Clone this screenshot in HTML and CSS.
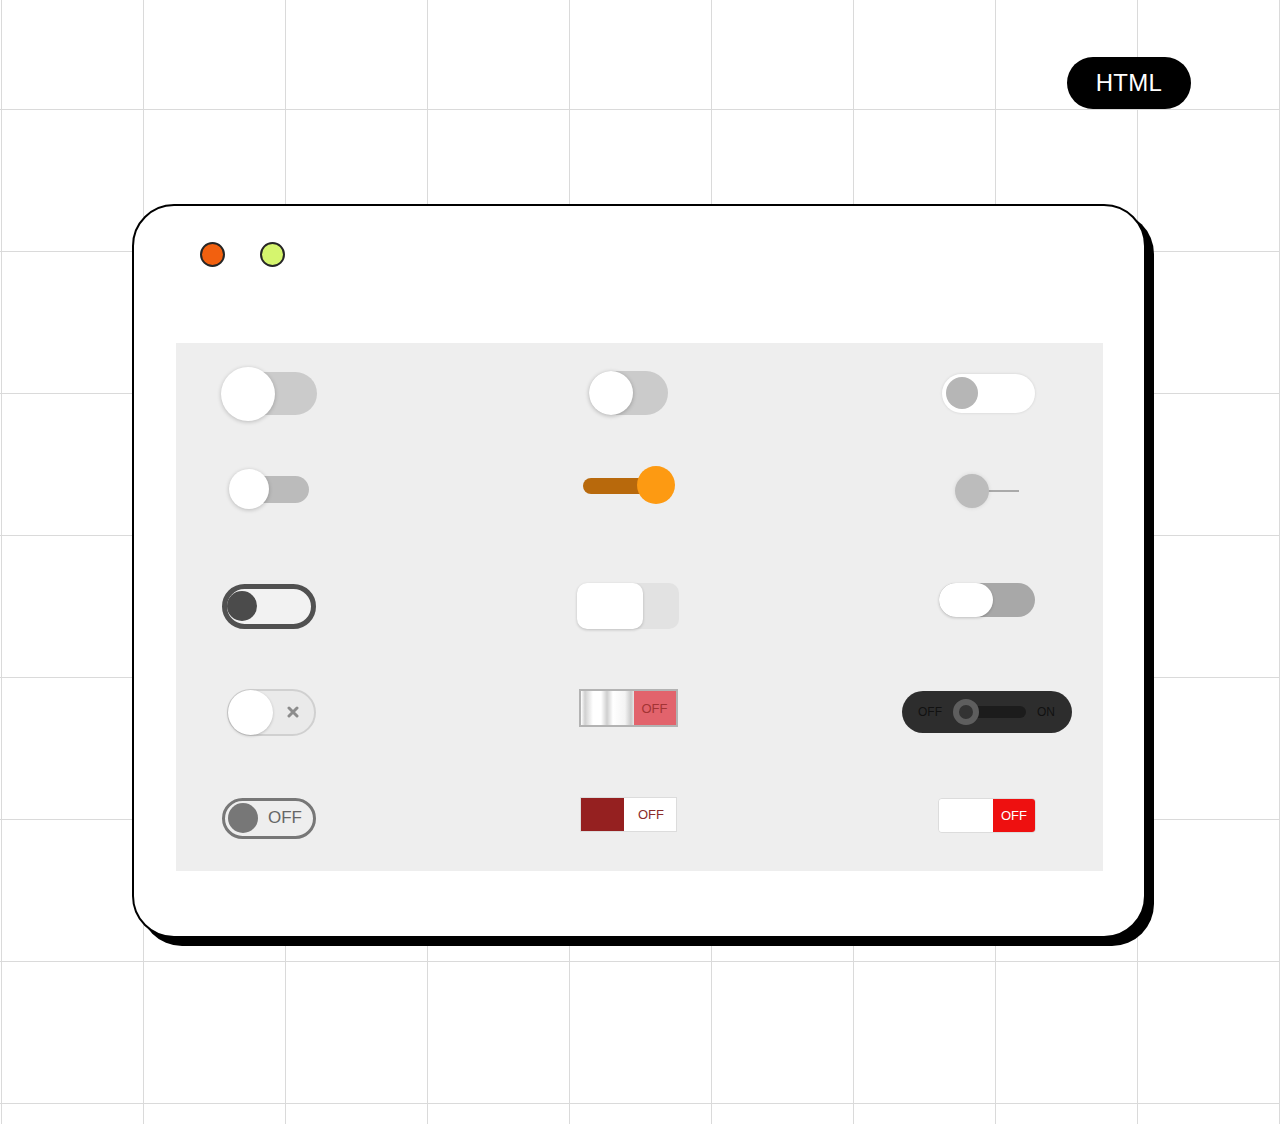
FILE: index.html
```html
<!DOCTYPE html>
<html lang="en">
<head>
<meta charset="utf-8">
<title>Toggle Switches</title>
<link rel="stylesheet" href="styles.css">
</head>
<body>
<div class="page">
  <header class="topbar"><span class="badge">HTML</span></header>
  <main class="window">
    <div class="dots"><span class="dot dot-orange"></span><span class="dot dot-green"></span></div>
    <section class="panel">
      <!-- row 1 -->
      <div class="cell"><div class="sw sw-ios-lg"><span class="knob"></span></div></div>
      <div class="cell"><div class="sw sw-ios"><span class="knob"></span></div></div>
      <div class="cell"><div class="sw sw-white"><span class="knob"></span></div></div>
      <!-- row 2 -->
      <div class="cell"><div class="sw sw-thin"><span class="knob"></span></div></div>
      <div class="cell"><div class="sw sw-orange"><span class="knob"></span></div></div>
      <div class="cell"><div class="sw sw-line"><span class="line"></span><span class="knob"></span></div></div>
      <!-- row 3 -->
      <div class="cell"><div class="sw sw-outline"><span class="knob"></span></div></div>
      <div class="cell"><div class="sw sw-square"><span class="knob"></span></div></div>
      <div class="cell"><div class="sw sw-pill"><span class="knob"></span></div></div>
      <!-- row 4 -->
      <div class="cell"><div class="sw sw-x"><span class="knob"></span>
        <svg class="x-mark" width="12" height="12" viewBox="0 0 12 12"><path d="M2 2L10 10M10 2L2 10" stroke="#8c8c8c" stroke-width="3" stroke-linecap="round"/></svg></div></div>
      <div class="cell"><div class="sw sw-metal"><span class="metal-knob"></span><span class="metal-label">OFF</span></div></div>
      <div class="cell"><div class="sw sw-dark"><span class="dark-label">OFF</span><span class="dark-track"><span class="dark-knob"></span></span><span class="dark-label">ON</span></div></div>
      <!-- row 5 -->
      <div class="cell"><div class="sw sw-off"><span class="off-knob"></span><span class="off-label">OFF</span></div></div>
      <div class="cell"><div class="sw sw-maroon"><span class="maroon-block"></span><span class="maroon-label">OFF</span></div></div>
      <div class="cell"><div class="sw sw-red"><span class="red-blank"></span><span class="red-label">OFF</span></div></div>
    </section>
  </main>
</div>
</body>
</html>
```
FILE: styles.css
```css
* { box-sizing: border-box; }
html, body { margin: 0; padding: 0; }
body {
  width: 1280px;
  height: 1124px;
  overflow: hidden;
  font-family: "Liberation Sans", Arial, sans-serif;
  background-color: #ffffff;
  background-image:
    linear-gradient(to right, #dadada 1px, transparent 1px),
    linear-gradient(to bottom, #dadada 1px, transparent 1px);
  background-size: 142px 142px;
  background-position: 143px 109px;
}
.page { padding: 57px 0 0 0; }
.topbar { display: flex; justify-content: flex-end; padding-right: 89px; }
.badge {
  width: 124px; height: 52px; border-radius: 26px;
  background: #000; color: #fff;
  display: flex; align-items: center; justify-content: center;
  font-size: 24px; letter-spacing: 0.3px;
}
.window {
  margin: 95px 0 0 132px;
  width: 1014px; height: 734px;
  border: 2px solid #000;
  border-radius: 42px;
  background: #fff;
  box-shadow: 8px 8px 0 #000;
  padding: 36px 0 0 42px;
}
.dots { display: flex; gap: 35px; padding-left: 24px; }
.dot { width: 25px; height: 25px; border-radius: 50%; border: 2px solid #262626; }
.dot-orange { background: #f2600f; }
.dot-green { background: #d5f56e; }

.panel {
  margin-top: 76px;
  width: 927px; height: 528px;
  background: #eeeeee;
  display: grid;
  grid-template-columns: 186px 532px 186px;
  grid-template-rows: 60px 130px 106px 106px 106px;
  padding-top: 20px;
}
.cell { display: flex; align-items: center; justify-content: center; }
.sw { position: relative; flex-shrink: 0; }
.knob { position: absolute; display: block; }

/* row 1 */
.sw-ios-lg { width: 89px; height: 43px; margin-left: 7px; border-radius: 22px; background: #cbcbcb; }
.sw-ios-lg .knob { left: -7px; top: -5px; width: 54px; height: 54px; border-radius: 50%; background: #fff; box-shadow: 0 1px 4px rgba(0,0,0,.22); }

.sw-ios { width: 79px; height: 44px; border-radius: 22px; background: #cbcbcb; }
.sw-ios .knob { left: 0; top: 0; width: 44px; height: 44px; border-radius: 50%; background: #fff; box-shadow: 0 1px 4px rgba(0,0,0,.25); }

.sw-white { width: 93px; height: 39px; border-radius: 20px; background: #fff; box-shadow: 0 0 3px rgba(0,0,0,.12); margin-left: 3px; }
.sw-white .knob { left: 4px; top: 3.5px; width: 32px; height: 32px; border-radius: 50%; background: #b6b6b6; }

/* row 2 */
.sw-thin { width: 72px; height: 27px; margin-left: 8px; margin-top: 3px; border-radius: 14px; background: #bbbbbb; }
.sw-thin .knob { left: -8px; top: -7px; width: 40px; height: 40px; border-radius: 50%; background: #fff; box-shadow: 0 1px 4px rgba(0,0,0,.22); }

.sw-orange { width: 70px; height: 16px; margin-right: 22px; margin-left: 2px; margin-top: -4px; border-radius: 8px; background: #b8690c; }
.sw-orange .knob { left: 54px; top: -12px; width: 38px; height: 38px; border-radius: 50%; background: #fd9a12; }

.sw-line { width: 64px; height: 34px; margin-top: 6px; }
.sw-line .line { position: absolute; left: 30px; top: 16px; width: 34px; height: 2px; background: #aaaaaa; }
.sw-line .knob { left: 0; top: 0; width: 34px; height: 34px; border-radius: 50%; background: #bcbcbc; box-shadow: 0 0 4px rgba(0,0,0,.1); }

/* row 3 */
.sw-outline { width: 94px; height: 45px; border: 5px solid #505050; border-radius: 23px; background: #f2f2f2; }
.sw-outline .knob { left: 0; top: 2.5px; width: 30px; height: 30px; border-radius: 50%; background: #4b4b4b; }

.sw-square { width: 102px; height: 46px; border-radius: 10px; background: #e2e2e2; }
.sw-square .knob { left: 0; top: 0; width: 66px; height: 46px; border-radius: 10px; background: #fff; box-shadow: 0 1px 3px rgba(0,0,0,.2); }

.sw-pill { width: 96px; height: 34px; border-radius: 17px; background: #a8a8a8; margin-bottom: 12px; }
.sw-pill .knob { left: 0; top: 0; width: 54px; height: 34px; border-radius: 17px; background: #fff; box-shadow: 0 1px 3px rgba(0,0,0,.2); }

/* row 4 */
.sw-x { width: 89px; height: 47px; border: 2px solid #d0d0d0; border-radius: 24px; background: #eaeaea; margin-left: 5px; }
.sw-x .knob { left: -1px; top: -1px; width: 45px; height: 45px; border-radius: 50%; background: #fff; box-shadow: 0 1px 3px rgba(0,0,0,.2); }
.x-mark { position: absolute; right: 15px; top: 15.5px; }

.sw-metal { width: 99px; height: 38px; border: 2px solid #b3b3b3; display: flex; margin-bottom: 8px; }
.metal-knob {
  width: 53px; height: 100%;
  background: linear-gradient(to right, #ffffff 0, #d0d0d0 4px, #ffffff 12px, #ffffff 20px, #cfcfcf 26px, #ffffff 32px, #f4f4f4 44px, #c9c9c9 50px, #e8e8e8 53px);
}
.metal-label { flex: 1; background: #e2636c; color: #a33434; font-size: 13px; display: flex; align-items: center; justify-content: center; }

.sw-dark { width: 170px; height: 42px; border-radius: 21px; background: #2d2d2d; display: flex; align-items: center; padding: 0 15px 0 16px; }
.dark-label { font-size: 12px; color: #111; }
.dark-track { position: relative; width: 72px; height: 12px; border-radius: 6px; background: #1c1c1c; margin: 0 11px 0 12px; }
.dark-knob { position: absolute; left: -1px; top: -7px; width: 26px; height: 26px; border-radius: 50%; background: #333; border: 6px solid #5e5e5e; }

/* row 5 */
.sw-off { width: 94px; height: 41px; border: 3px solid #777; border-radius: 21px; background: #eeeeee; display: flex; align-items: center; }
.off-knob { width: 30px; height: 30px; border-radius: 50%; background: #777; margin-left: 3px; }
.off-label { font-size: 17px; color: #666; margin-left: 10px; }

.sw-maroon { width: 97px; height: 35px; display: flex; border: 1px solid #dcdcdc; margin-bottom: 7px; }
.maroon-block { width: 43px; background: #952020; }
.maroon-label { flex: 1; background: #fff; color: #8b2b2b; font-size: 13px; display: flex; align-items: center; justify-content: center; padding-left: 3px; }

.sw-red { width: 98px; height: 35px; display: flex; border: 1px solid #dcdcdc; border-radius: 4px; overflow: hidden; margin-bottom: 5px; }
.red-blank { width: 54px; background: #fff; }
.red-label { flex: 1; background: #ee1010; color: #fff; font-size: 13px; display: flex; align-items: center; justify-content: center; }
```
